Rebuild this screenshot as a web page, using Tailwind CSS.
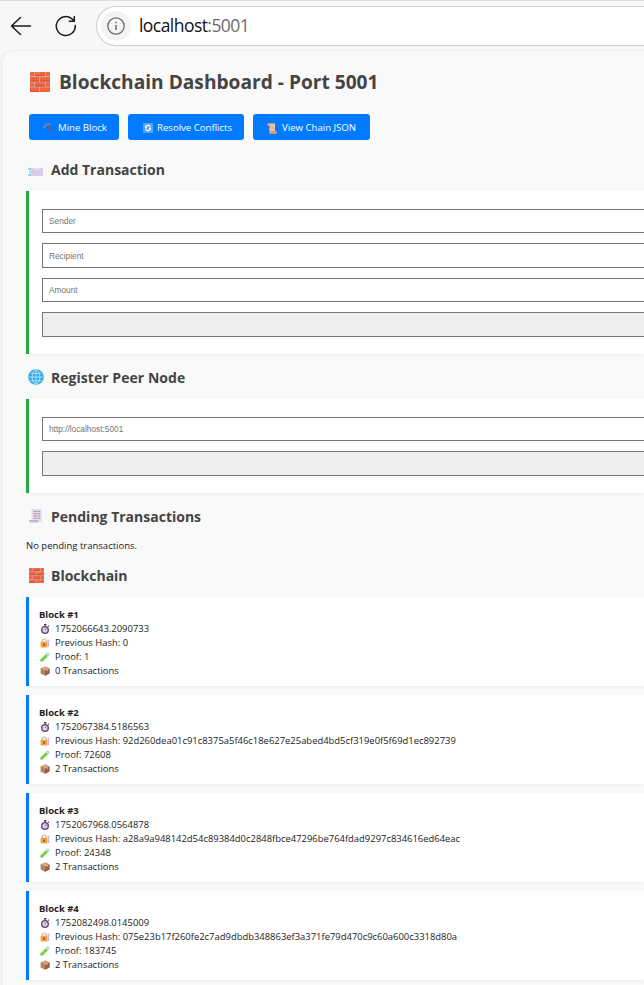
<!DOCTYPE html>
<html lang="en">
<head>
<meta charset="utf-8">
<title>Blockchain Dashboard</title>
<script src="https://cdn.jsdelivr.net/npm/@tailwindcss/browser@4"></script>
</head>
<body class="w-[644px] h-[985px] overflow-hidden bg-[#f7f7f7] font-['Open_Sans','Noto_Sans',sans-serif] text-[9.43px] text-[#222]">
<svg class="hidden">
  <symbol id="brick" viewBox="0 0 20 20">
    <rect width="20" height="20" rx="1.5" fill="#c9a9a8"/>
    <g fill="#f4633a"><path d="M1 0h3v4H0V1zM5 0h10v4H5zM16 0h3l1 1v3h-4zM0 5h9v4.500H0zM10 5h10v4.500H10zM0 10.500h4v4H0zM5 10.500h10v4H5zM16 10.500h4v4h-4zM0 15.500h9V20H1l-1-1zM10 15.500h10V19l-1 1h-9z"/></g>
    <path d="M5 3.500h10M0 9h9M10 9h10M5 14h10M0 19.500h9" stroke="#d94a38" stroke-width="1"/>
    <path d="M10 6h5M1 11h3M6 1h4M11 16h5" stroke="#ff8051" stroke-width="1"/>
  </symbol>
  <symbol id="watch" viewBox="0 0 10 10">
    <path d="M4 .5h2.500M5.200.5v2M8 1.800l.8.800" stroke="#50405f" stroke-width="1.300"/>
    <circle cx="5" cy="5.900" r="3.300" fill="#d9cfe6" stroke="#5b4a70" stroke-width="1.400"/>
    <path d="M5 6l1.300-1.600" stroke="#d8405d" stroke-width="1"/>
  </symbol>
  <symbol id="lock" viewBox="0 0 10 10">
    <path d="M2.300 5V3a2 2 0 0 1 4 0v2" fill="none" stroke="#c8b4a8" stroke-width="1.200"/>
    <path d="M8.500 2v7" stroke="#c5b2cc" stroke-width="1.100"/><circle cx="8.500" cy="2.600" r="1.200" fill="#d6c6de"/>
    <rect x=".6" y="3.800" width="7" height="5.700" rx=".8" fill="#f5a142"/><path d="M4.100 5.500v2.200" stroke="#6d3c36" stroke-width="1.300"/>
  </symbol>
  <symbol id="tube" viewBox="0 0 10 10">
    <path d="M1.700 8.300L8 2" stroke="#bfe6d4" stroke-width="3.300" stroke-linecap="round"/>
    <path d="M1.800 8.200L6 4.100" stroke="#76cf3c" stroke-width="2.700" stroke-linecap="round"/>
    <path d="M6.300.8l2.900 2.900" stroke="#a7ddf0" stroke-width="1.100"/>
  </symbol>
  <symbol id="box" viewBox="0 0 10 10">
    <path d="M.6 2.600L5.300.5l4.200 2v5L5 9.700.6 7.500z" fill="#b9805e"/><path d="M5 4.700l4.500-2.200v5L5 9.700z" fill="#966250"/><path d="M.6 2.600L5.300.5l4.200 2L5 4.700z" fill="#cf9b74"/><path d="M3 1.600l4.300 2v1.500" fill="none" stroke="#e2bf9e" stroke-width=".8"/>
  </symbol>
</svg>

<header class="flex h-[50px] items-center border-t border-[#dcdcdc]">
  <svg class="ml-[10px] w-[22px] h-[22px] shrink-0" viewBox="0 0 22 22" fill="none" stroke="#1b1b1b" stroke-width="1.500" stroke-linecap="round" stroke-linejoin="round"><path d="M10.500 2.500L1.500 11l9 8.500M1.500 11h19"/></svg>
  <svg class="ml-[23px] w-[22px] h-[22px] shrink-0" viewBox="0 0 22 22" fill="none" stroke="#1b1b1b" stroke-width="1.500" stroke-linecap="round" stroke-linejoin="round"><path d="M20.300 10.500A9.500 9.500 0 1 1 17.500 4.300L19.300 6.200M19.300 1.500V6.200H14.300"/></svg>
  <div class="ml-[19px] flex h-[40px] min-w-0 grow items-center rounded-l-full border border-r-0 border-[#cfcfcf] bg-white pl-[4px]">
    <span class="flex h-[30px] w-[30px] items-center justify-center rounded-full bg-[#f3f3f3]">
      <svg class="w-[18px] h-[18px]" viewBox="0 0 18 18" fill="none" stroke="#6b6b6b" stroke-width="1.300"><circle cx="9" cy="9" r="8.200"/><path d="M9 8v5" stroke-width="1.500"/><circle cx="9" cy="5.600" r=".6" fill="#6b6b6b" stroke-width=".6"/></svg>
    </span>
    <span class="ml-[8px] text-[17.5px] leading-none text-[#111] tracking-[-0.55px]">localhost<span class="text-[#6c6c6c]">:5001</span></span>
  </div>
</header>

<main class="ml-[1px] h-[935px] rounded-tl-[12px] border border-r-0 border-b-0 border-[#ebebeb] bg-[#f9f9f9] pl-[24px]">
  <h1 class="mt-[16px] flex h-[30px] items-center pl-[4px] text-[19.15px] font-bold text-[#444]"><svg class="mr-[9px] h-[20px] w-[20px]"><use href="#brick"/></svg>Blockchain Dashboard - Port 5001</h1>

  <div class="mt-[17px] flex gap-[9px] pl-[3px] text-[9.6px] text-white">
    <button class="flex h-[26px] w-[90px] items-center whitespace-nowrap rounded-[3px] bg-[#007bff] pl-[14px] pt-[2px]">
      <svg class="mr-[5px] h-[10px] w-[10px]" viewBox="0 0 10 10"><path d="M4.500 3L9.300 9.300" stroke="#8b4b55" stroke-width="1.600"/><path d="M.5 5.500C1.500 3 4 1 7.300.8" fill="none" stroke="#85899c" stroke-width="1.600"/></svg>Mine Block</button>
    <button class="flex h-[26px] w-[116px] items-center whitespace-nowrap rounded-[3px] bg-[#007bff] pl-[15px] pt-[2px]">
      <svg class="mr-[4px] mb-[1px] h-[10px] w-[10px]" viewBox="0 0 10 10"><rect width="10" height="10" rx="1" fill="#58a7ef"/><path d="M7.300 3.600A2.600 2.600 0 0 0 2.600 4.300M2.700 6.400A2.600 2.600 0 0 0 7.400 5.700" fill="none" stroke="#fff" stroke-width="1.200"/><path d="M2 2.700v2.500h2.500zM8 7.300V4.800H5.500z" fill="#fff"/></svg>Resolve Conflicts</button>
    <button class="flex h-[26px] w-[117px] items-center whitespace-nowrap rounded-[3px] bg-[#007bff] pl-[14px] pt-[2px]">
      <svg class="mr-[5px] h-[11px] w-[10px]" viewBox="0 0 10 11"><path d="M1 .5h7v7.500h1.500v2.500H2.500V3H1z" fill="#f3c9a0"/><path d="M.5.5h2V3h-2zM3 8h6.500v2.500H3z" fill="#dd9a72"/><path d="M3.700 2.500h3M3.700 4.300h3M3.700 6h3" stroke="#d9a785" stroke-width=".6"/></svg>View Chain JSON</button>
  </div>

  <h2 class="mt-[17px] flex h-[24px] items-center pl-[2px] text-[14px] font-bold text-[#444]">
    <svg class="mr-[7px] mt-[6px] h-[16px] w-[16px]" viewBox="0 0 16 16"><path d="M3 4h12v8H2z" fill="#dccdea"/><path d="M3 4l6 4.500L15 4" fill="#e8dbf0" stroke="#cbb9da" stroke-width=".7"/><path d="M0 5h3M1 8h2M0 11h3" stroke="#71cbea" stroke-width="1.300"/></svg>Add Transaction</h2>
  <form class="mt-[10px] flex h-[163px] flex-col border-l-[3px] border-[#28a745] bg-white pl-[13px] pt-[18px] shadow-[0_1px_3px_rgba(0,0,0,0.06)] font-['Liberation_Sans',Arial,sans-serif] text-[8.3px]">
    <input class="block h-[24px] w-full shrink-0 border border-r-0 border-[#767676] pl-[6px] placeholder:text-[#757575]" placeholder="Sender">
    <input class="mt-[10px] block h-[25px] w-full shrink-0 border border-r-0 border-[#767676] pl-[6px] pt-[1px] placeholder:text-[#757575]" placeholder="Recipient">
    <input class="mt-[10px] block h-[24px] w-full shrink-0 border border-r-0 border-[#767676] pl-[6px] placeholder:text-[#757575]" placeholder="Amount">
    <button type="button" class="mt-[10px] block h-[25px] w-full shrink-0 rounded-l-[1px] border border-r-0 border-[#767676] bg-[#efefef]"></button>
  </form>

  <h2 class="mt-[11px] flex h-[24px] items-center pl-[2px] text-[14px] font-bold text-[#444]">
    <svg class="mr-[7px] h-[16px] w-[16px]" viewBox="0 0 16 16"><circle cx="8" cy="8" r="7.800" fill="#36a8e8"/><path d="M8 1v14M1 8h14M2.500 4.300h11M2.500 11.700h11" stroke="#b7e9ff" stroke-width=".9"/><ellipse cx="8" cy="8" rx="3.800" ry="7" fill="none" stroke="#b7e9ff" stroke-width=".9"/></svg><span class="tracking-[0.04px]">Register Peer Node</span></h2>
  <form class="mt-[10px] flex h-[94px] flex-col border-l-[3px] border-[#28a745] bg-white pl-[13px] pt-[18px] shadow-[0_1px_3px_rgba(0,0,0,0.06)] font-['Liberation_Sans',Arial,sans-serif] text-[8.3px]">
    <input class="block h-[24px] w-full shrink-0 border border-r-0 border-[#767676] pl-[6px] placeholder:text-[#757575]" placeholder="http://localhost:5001">
    <button type="button" class="mt-[10px] block h-[25px] w-full shrink-0 rounded-l-[1px] border border-r-0 border-[#767676] bg-[#efefef]"></button>
  </form>

  <h2 class="mt-[11px] flex h-[24px] items-center pl-[2px] text-[14px] font-bold text-[#444]">
    <svg class="mr-[7px] h-[16px] w-[16px]" viewBox="0 0 16 16"><path d="M3.500 1H14v13H3.500z" fill="#e3dcea"/><path d="M1 12h9.500v2.500H2q-1-1-1-2.500z" fill="#c5b4d9"/><path d="M5.500 3.500h6.500M5.500 5.700h6.500M5.500 7.900h6.500M5.500 10.100h6.500" stroke="#a59bb0" stroke-width="1" stroke-dasharray="3.500 .6"/></svg>Pending Transactions</h2>
  <p class="mt-[11px] h-[14px] text-[9.5px] leading-[14px]">No pending transactions.</p>
  <h2 class="mt-[10px] flex h-[24px] items-center pl-[3px] text-[14px] font-bold text-[#444]"><svg class="mr-[7px] h-[15px] w-[15px]"><use href="#brick"/></svg>Blockchain</h2>

  <div id="chain" class="mt-[10px] flex flex-col gap-[9px]"></div>
</main>
<script>
const blocks = [
  ["1752066643.2090733", "0", "1", 0],
  ["1752067384.5186563", "92d260dea01c91c8375a5f46c18e627e25abed4bd5cf319e0f5f69d1ec892739", "72608", 2],
  ["1752067968.0564878", "a28a9a948142d54c89384d0c2848fbce47296be764fdad9297c834616ed64eac", "24348", 2],
  ["1752082498.0145009", "075e23b17f260fe2c7ad9dbdb348863ef3a371fe79d470c9c60a600c3318d80a", "183745", 2]
];
const row = (icon, text) => `<div class="flex h-[14px] items-center whitespace-nowrap pl-[1px]"><svg class="mr-[5px] h-[10px] w-[10px]"><use href="#${icon}"/></svg>${text}</div>`;
document.getElementById("chain").innerHTML = blocks.map(([time, hash, proof, count], i) =>
  `<article class="h-[89px] border-l-[3px] border-[#007bff] bg-white pl-[10px] pt-[11px] leading-[14px] shadow-[0_1px_3px_rgba(0,0,0,0.06)]">
    <div class="h-[14px] font-bold">Block #${i + 1}</div>
    ${row("watch", time)}${row("lock", "Previous Hash: " + hash)}${row("tube", "Proof: " + proof)}${row("box", count + " Transactions")}
  </article>`).join("");
</script>
</body>
</html>
